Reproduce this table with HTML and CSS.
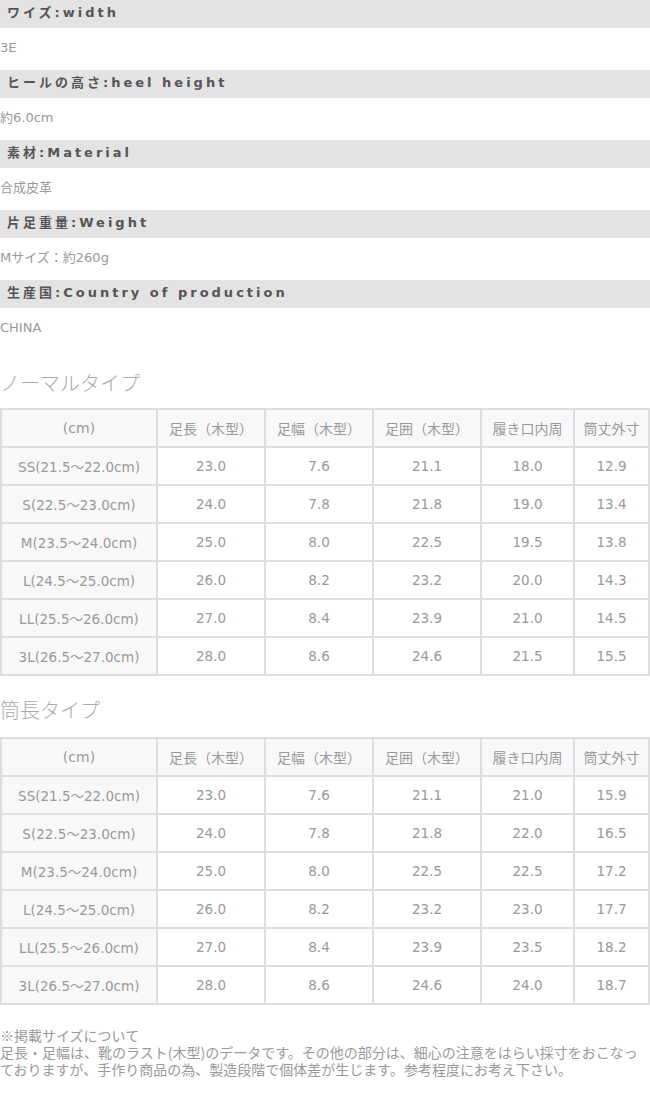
FILE: index.html
```html
<!DOCTYPE html>
<html lang="ja">
<head>
<meta charset="utf-8">
<link rel="stylesheet" href="styles.css">
</head>
<body>
<div class="spec">
  <div class="bar">ワイズ:width</div>
  <div class="val">3E</div>
  <div class="bar">ヒールの高さ:heel height</div>
  <div class="val">約6.0cm</div>
  <div class="bar">素材:Material</div>
  <div class="val">合成皮革</div>
  <div class="bar">片足重量:Weight</div>
  <div class="val">Mサイズ：約260g</div>
  <div class="bar">生産国:Country of production</div>
  <div class="val">CHINA</div>
</div>

<h2 class="ttl first">ノーマルタイプ</h2>
<table class="size">
  <colgroup><col class="c1"><col class="c2"><col class="c2"><col class="c2"><col class="c5"><col></colgroup>
  <tr class="hd"><th>(cm)</th><th>足長（木型）</th><th>足幅（木型）</th><th>足囲（木型）</th><th>履き口内周</th><th>筒丈外寸</th></tr>
  <tr><th>SS(21.5～22.0cm)</th><td>23.0</td><td>7.6</td><td>21.1</td><td>18.0</td><td>12.9</td></tr>
  <tr><th>S(22.5～23.0cm)</th><td>24.0</td><td>7.8</td><td>21.8</td><td>19.0</td><td>13.4</td></tr>
  <tr><th>M(23.5～24.0cm)</th><td>25.0</td><td>8.0</td><td>22.5</td><td>19.5</td><td>13.8</td></tr>
  <tr><th>L(24.5～25.0cm)</th><td>26.0</td><td>8.2</td><td>23.2</td><td>20.0</td><td>14.3</td></tr>
  <tr><th>LL(25.5～26.0cm)</th><td>27.0</td><td>8.4</td><td>23.9</td><td>21.0</td><td>14.5</td></tr>
  <tr><th>3L(26.5～27.0cm)</th><td>28.0</td><td>8.6</td><td>24.6</td><td>21.5</td><td>15.5</td></tr>
</table>

<h2 class="ttl">筒長タイプ</h2>
<table class="size">
  <colgroup><col class="c1"><col class="c2"><col class="c2"><col class="c2"><col class="c5"><col></colgroup>
  <tr class="hd"><th>(cm)</th><th>足長（木型）</th><th>足幅（木型）</th><th>足囲（木型）</th><th>履き口内周</th><th>筒丈外寸</th></tr>
  <tr><th>SS(21.5～22.0cm)</th><td>23.0</td><td>7.6</td><td>21.1</td><td>21.0</td><td>15.9</td></tr>
  <tr><th>S(22.5～23.0cm)</th><td>24.0</td><td>7.8</td><td>21.8</td><td>22.0</td><td>16.5</td></tr>
  <tr><th>M(23.5～24.0cm)</th><td>25.0</td><td>8.0</td><td>22.5</td><td>22.5</td><td>17.2</td></tr>
  <tr><th>L(24.5～25.0cm)</th><td>26.0</td><td>8.2</td><td>23.2</td><td>23.0</td><td>17.7</td></tr>
  <tr><th>LL(25.5～26.0cm)</th><td>27.0</td><td>8.4</td><td>23.9</td><td>23.5</td><td>18.2</td></tr>
  <tr><th>3L(26.5～27.0cm)</th><td>28.0</td><td>8.6</td><td>24.6</td><td>24.0</td><td>18.7</td></tr>
</table>

<p class="note">※掲載サイズについて<br>足長・足幅は、靴のラスト(木型)のデータです。その他の部分は、細心の注意をはらい採寸をおこなっておりますが、手作り商品の為、製造段階で個体差が生じます。参考程度にお考え下さい。</p>
</body>
</html>
```

FILE: styles.css
```css
html, body {
  margin: 0;
  padding: 0;
  background: #fff;
}
body {
  font-family: "DejaVu Sans", "Noto Sans CJK JP", sans-serif;
  color: #888;
  font-size: 13px;
  width: 650px;
}
.spec {
  display: flex;
  flex-direction: column;
}
.bar {
  height: 28px;
  line-height: 26px;
  background: #e3e3e3;
  color: #555;
  font-family: "DejaVu Sans", "Noto Sans CJK JP", sans-serif;
  font-weight: bold;
  font-size: 13px;
  letter-spacing: 3px;
  padding-left: 7px;
}
.val {
  height: 42px;
  line-height: 40px;
  color: #999;
  font-size: 13px;
}
.ttl {
  margin: 0;
  font-family: "Noto Sans CJK JP", sans-serif;
  font-weight: 300;
  font-size: 20px;
  line-height: 28px;
  color: #aaa;
  padding-top: 20px;
  height: 41px;
}
.ttl.first {
  padding-top: 19px;
  height: 39px;
}
.size {
  width: 650px;
  border-collapse: collapse;
  table-layout: fixed;
  font-size: 13.5px;
  color: #999;
}
.size col.c1 { width: 156px; }
.size col.c2 { width: 108px; }
.size col.c5 { width: 93px; }
.size th, .size td {
  border: 2px solid #ddd;
  height: 38px;
  padding: 0 0 1px;
  text-align: center;
  font-weight: normal;
  box-sizing: border-box;
}
.size tr.hd th {
  background: #f8f8f8;
  font-size: 14px;
}
.size th { background: #f8f8f8; }
.size td { background: #fff; }
.note {
  margin: 22px 0 0;
  font-family: "Noto Sans CJK JP", sans-serif;
  font-size: 14px;
  line-height: 17px;
  color: #999;
}
```
